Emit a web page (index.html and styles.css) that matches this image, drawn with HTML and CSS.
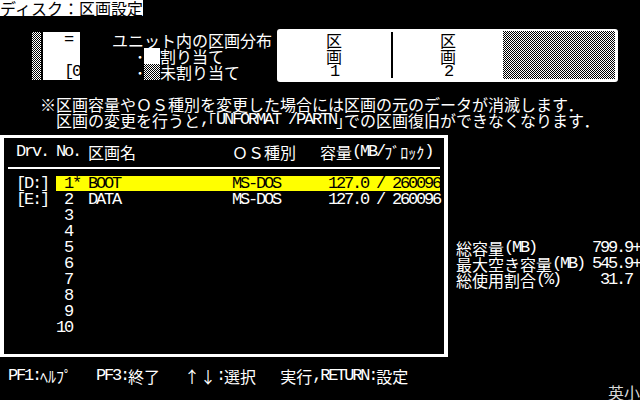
FILE: index.html
```html
<!DOCTYPE html>
<html lang="ja">
<head>
<meta charset="utf-8">
<title>ディスク：区画設定</title>
<link rel="stylesheet" href="styles.css">
</head>
<body>
<div class="screen">
  <div class="row"><span class="title">ディスク：区画設定</span></div>
  <div class="top">
    <div class="map">
      <div class="map-bar"></div>
      <div class="map-panel">
        <div class="row"><span class="a">=</span></div>
        <div class="row"></div>
        <div class="row"><span class="a">[0</span></div>
      </div>
    </div>
    <div class="legend">
      <div class="row">ユニット内の区画分布</div>
      <div class="row"><span class="a">   </span>･<span class="sw sw-used"></span>割り当て</div>
      <div class="row"><span class="a">   </span>･<span class="sw sw-free"></span>未割り当て</div>
    </div>
    <div class="bar">
      <div class="part part-1">
        <div class="row">区</div>
        <div class="row">画</div>
        <div class="row"><span class="a">1</span></div>
      </div>
      <div class="bar-div"></div>
      <div class="part part-2">
        <div class="row">区</div>
        <div class="row">画</div>
        <div class="row"><span class="a">2</span></div>
      </div>
      <div class="bar-free"></div>
    </div>
  </div>
  <div class="row"><span class="a">     </span>※区画容量やＯＳ種別を変更した場合には区画の元のデータが消滅します．</div>
  <div class="row"><span class="a">       </span>区画の変更を行うと<span class="a">,</span>｢<span class="a">UNFORMAT /PARTN</span>｣での区画復旧ができなくなります．</div>
  <div class="main">
    <div class="table">
      <div class="row"><span class="a">Drv. No. </span>区画名<span class="a">            </span>ＯＳ種別<span class="a">   </span>容量<span class="a">(MB/</span>ﾌﾞﾛｯｸ<span class="a">)</span></div>
      <div class="rule-row"><div class="rule"></div></div>
      <div class="row"><span class="a">[D:] </span><span class="a hl"> 1* BOOT              MS-DOS      127.0 / 260096</span></div>
      <div class="row"><span class="a">[E:]  2  DATA              MS-DOS      127.0 / 260096</span></div>
      <div class="row"><span class="a">      3</span></div>
      <div class="row"><span class="a">      4</span></div>
      <div class="row"><span class="a">      5</span></div>
      <div class="row"><span class="a">      6</span></div>
      <div class="row"><span class="a">      7</span></div>
      <div class="row"><span class="a">      8</span></div>
      <div class="row"><span class="a">      9</span></div>
      <div class="row"><span class="a">     10</span></div>
    </div>
    <div class="stats">
      <div class="row">総容量<span class="a">(MB)       799.9+</span></div>
      <div class="row">最大空き容量<span class="a">(MB) 545.9+</span></div>
      <div class="row">総使用割合<span class="a">(%)     31.7</span></div>
    </div>
  </div>
  <div class="row"><span class="a"> PF1:</span>ﾍﾙﾌﾟ<span class="a">   PF3:</span>終了<span class="a">   </span><span class="fw">↑</span><span class="fw">↓</span><span class="a">:</span>選択<span class="a">   </span>実行<span class="a">,RETURN:</span>設定</div>
  <div class="row ime">英小</div>
</div>
</body>
</html>
```

FILE: styles.css
```css
* {
  box-sizing: border-box;
  margin: 0;
  padding: 0;
}

html,
body {
  background: #000;
}

body {
  width: 640px;
  height: 400px;
  overflow: hidden;
  color: #fff;
  font-family: "Noto Sans CJK JP", "Noto Sans CJK SC", sans-serif;
  font-size: 16px;
  line-height: 16px;
}

.screen {
  width: 640px;
  height: 400px;
}

.row {
  height: 16px;
  white-space: pre;
}

.a {
  font-family: "Liberation Mono", "DejaVu Sans Mono", monospace;
  font-size: 17px;
  line-height: 16px;
  letter-spacing: -2.2px;
  vertical-align: top;
}

.fw {
  display: inline-block;
  width: 16px;
  height: 16px;
  text-align: center;
  vertical-align: top;
}

.title {
  display: inline-block;
  height: 16px;
  vertical-align: top;
  background: #fff;
  color: #000;
}

/* top area: rows 1-5 */
.top {
  display: flex;
  align-items: flex-start;
  height: 80px;
}

.map {
  display: flex;
  gap: 2px;
  margin: 16px 0 0 32px;
  height: 48px;
}

.map-bar {
  width: 9px;
  height: 48px;
  background: repeating-conic-gradient(#fff 0 25%, #000 0 50%) 0 0 / 2px 2px;
}

.map-panel {
  width: 37px;
  height: 48px;
  background: #fff;
  color: #000;
  padding-left: 21px;
  overflow: hidden;
}

.legend {
  margin: 16px 0 0 32px;
}

.sw {
  display: inline-block;
  width: 16px;
  height: 16px;
  vertical-align: top;
}

.sw-used {
  background: #fff;
}

.sw-free {
  background: repeating-conic-gradient(#fff 0 25%, #000 0 50%) 0 0 / 2px 2px;
}

.bar {
  display: flex;
  align-items: flex-start;
  margin: 13px 0 0 5px;
  width: 341px;
  height: 53px;
  background: #fff;
  border-radius: 3px;
  color: #000;
}

.part {
  padding-top: 3px;
  text-align: center;
}

.part-1 {
  width: 114px;
}

.part-2 {
  width: 110px;
}

.bar-div {
  width: 2px;
  height: 46px;
  margin-top: 3px;
  background: #000;
}

.bar-free {
  width: 112px;
  height: 48px;
  margin-top: 2px;
  background: repeating-conic-gradient(#fff 0 25%, #000 0 50%) 0 0 / 2px 2px;
}

/* main area: rows 8-22 */
.main {
  display: flex;
  align-items: flex-start;
  height: 240px;
}

.table {
  margin-top: 7px;
  width: 448px;
  height: 222px;
  border: solid #fff;
  border-width: 3px 4px;
  padding: 6px 0 0 12px;
}

.rule-row {
  height: 16px;
  padding-top: 7px;
}

.rule {
  margin-left: -8px;
  width: 432px;
  height: 2px;
  background: #fff;
}

.hl {
  display: inline-block;
  height: 15px;
  background: #ffff00;
  color: #000;
}

.stats {
  margin: 112px 0 0 8px;
}

.ime {
  text-align: right;
  color: #d8d8d8;
}
```
